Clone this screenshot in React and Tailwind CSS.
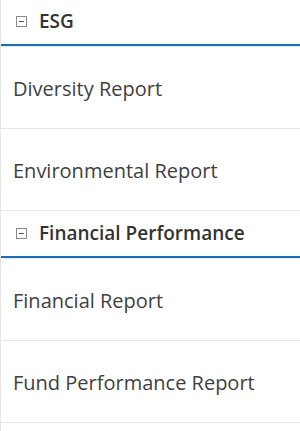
import React from 'react';

const sections = [
  { title: 'ESG', items: ['Diversity Report', 'Environmental Report'] },
  { title: 'Financial Performance', items: ['Financial Report', 'Fund Performance Report'] },
];

const MinusBox = () => (
  <svg width="11" height="11" viewBox="0 0 11 11" className="shrink-0">
    <rect x="0.5" y="0.5" width="10" height="10" fill="#fff" stroke="#8a8a8a" />
    <rect x="3" y="5" width="5" height="1" fill="#555" />
  </svg>
);

const App = () => {
  return (
    <div
      className="w-[300px] h-[431px] overflow-hidden bg-white border-l border-[#e6e6e6]"
      style={{ fontFamily: '"Open Sans", sans-serif' }}
    >
      <div className="-mt-[1px]">
        {sections.map((section) => (
          <div key={section.title}>
            {/* section header */}
            <div className="flex items-center gap-[12px] h-[47px] pl-[15px] border-b-2 border-[#1a6fb9]">
              <MinusBox />
              <span className="text-[19px] font-semibold text-[#333]">{section.title}</span>
            </div>
            <div className="h-px bg-[#e6e6e6]"></div>
            {section.items.map((item) => (
              <div
                key={item}
                className="flex items-center h-[82px] pl-[12px] pt-[2px] border-b border-[#e6e6e6] text-[20px] text-[#3f3f3f]"
              >
                {item}
              </div>
            ))}
          </div>
        ))}
      </div>
    </div>
  );
};

export default App;
